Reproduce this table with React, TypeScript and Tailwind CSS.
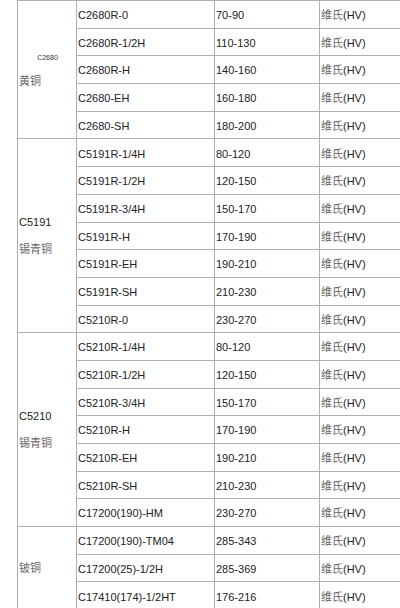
import React from 'react';

type Group = {
  code: string;
  name: string;
  small?: boolean;
  rows: [string, string][];
};

const groups: Group[] = [
  {
    code: 'C2680',
    name: '黄铜',
    small: true,
    rows: [
      ['C2680R-0', '70-90'],
      ['C2680R-1/2H', '110-130'],
      ['C2680R-H', '140-160'],
      ['C2680-EH', '160-180'],
      ['C2680-SH', '180-200'],
    ],
  },
  {
    code: 'C5191',
    name: '锡青铜',
    rows: [
      ['C5191R-1/4H', '80-120'],
      ['C5191R-1/2H', '120-150'],
      ['C5191R-3/4H', '150-170'],
      ['C5191R-H', '170-190'],
      ['C5191R-EH', '190-210'],
      ['C5191R-SH', '210-230'],
      ['C5210R-0', '230-270'],
    ],
  },
  {
    code: 'C5210',
    name: '锡青铜',
    rows: [
      ['C5210R-1/4H', '80-120'],
      ['C5210R-1/2H', '120-150'],
      ['C5210R-3/4H', '150-170'],
      ['C5210R-H', '170-190'],
      ['C5210R-EH', '190-210'],
      ['C5210R-SH', '210-230'],
      ['C17200(190)-HM', '230-270'],
    ],
  },
  {
    code: '',
    name: '铍铜',
    rows: [
      ['C17200(190)-TM04', '285-343'],
      ['C17200(25)-1/2H', '285-369'],
      ['C17410(174)-1/2HT', '176-216'],
    ],
  },
];

function GroupLabel({ g }: { g: Group }) {
  if (g.small) {
    return (
      <div className="flex flex-col">
        <span className="h-[23px] leading-[23px] text-center text-[7px] text-[#333]">{g.code}</span>
        <span className="h-[25px] leading-[25px] text-[#666]">{g.name}</span>
      </div>
    );
  }
  return (
    <div className="flex flex-col">
      {g.code && <span className="leading-[27px] text-[#222]">{g.code}</span>}
      <span className="leading-[27px] text-[#666]">{g.name}</span>
    </div>
  );
}

export default function App() {
  return (
    <div
      className="w-[400px] h-[608px] overflow-hidden bg-white text-[11px] text-[#222]"
      style={{ fontFamily: '"Liberation Sans", "Noto Sans CJK SC", sans-serif' }}
    >
      <table className="ml-[17px] border-collapse table-fixed w-[440px]">
        <colgroup>
          <col className="w-[59px]" />
          <col className="w-[138px]" />
          <col className="w-[105px]" />
          <col className="w-[138px]" />
        </colgroup>
        <tbody>
          {groups.map((g) =>
            g.rows.map((r, i) => (
              <tr key={g.code + g.name + r[0]} className="h-[27.7px]">
                {i === 0 && (
                  <td rowSpan={g.rows.length} className="border border-[#b0b0b0] p-0 pl-px align-middle">
                    <GroupLabel g={g} />
                  </td>
                )}
                <td className="border border-[#b0b0b0] p-0 pl-px pt-[2px] align-middle">{r[0]}</td>
                <td className="border border-[#b0b0b0] p-0 pl-px pt-[2px] align-middle">{r[1]}</td>
                <td className="border border-[#b0b0b0] p-0 pl-px pt-[2px] align-middle">
                  <span className="text-[#666]">维氏</span>(HV)
                </td>
              </tr>
            ))
          )}
        </tbody>
      </table>
    </div>
  );
}
